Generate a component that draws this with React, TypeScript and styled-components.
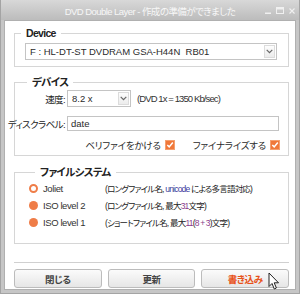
import React from "react";
import styled, { createGlobalStyle } from "styled-components";

const Global = createGlobalStyle`
  html, body { margin: 0; padding: 0; background: #ffffff; }
  body {
    font-family: "Liberation Sans", "Noto Sans CJK JP", sans-serif;
    font-size: 9.5px;
    color: #2a2a2a;
    font-feature-settings: "palt" 1;
  }
  * { box-sizing: border-box; }
`;

const Window = styled.div`
  width: 300px;
  height: 294px;
  display: flex;
  flex-direction: column;
  background: #c6c6c6;
  border: 1px solid #a4a4a4;
  border-top: none;
  padding: 0 3px 3px 3px;
`;

const TitleBar = styled.div`
  height: 20px;
  display: flex;
  align-items: center;
  position: relative;
  background: linear-gradient(#d8d8d8, #bcbcbc);
  margin: 0 -3px;
`;

const Title = styled.div`
  flex: 1;
  text-align: center;
  color: #f7f7f7;
  font-size: 9.5px;
  letter-spacing: -0.55px;
  padding-top: 1px;
`;

const Controls = styled.div`
  position: absolute;
  right: 4px;
  top: 7px;
  display: flex;
  gap: 5px;
  align-items: flex-end;
`;

const Client = styled.div`
  flex: 1;
  background: #ffffff;
  border: 1px solid #b0b0b0;
  padding: 0 6px 0 9px;
  display: flex;
  flex-direction: column;
`;

const Group = styled.section<{ $h: number; $mt: number }>`
  margin-top: ${(p) => p.$mt}px;
  height: ${(p) => p.$h}px;
  border: 1px solid #d6d6d6;
  display: flex;
  flex-direction: column;
`;

const Legend = styled.div<{ $lx: number }>`
  margin: -7px 0 0 ${(p) => p.$lx}px;
  height: 12px;
  line-height: 12px;
  padding: 0 5px;
  width: fit-content;
  background: #ffffff;
  font-weight: bold;
  font-size: 10.5px;
  letter-spacing: -0.7px;
  color: #222;
`;

const SelectBox = styled.div<{ $w: number; $h: number }>`
  width: ${(p) => p.$w}px;
  height: ${(p) => p.$h}px;
  border: 1px solid #c4c4c4;
  display: flex;
  align-items: center;
  background: #fff;
  font-size: 9.5px;
  padding-left: 4px;
  span { flex: 1; white-space: nowrap; }
`;

const Arrow = styled.div`
  width: 11px;
  align-self: stretch;
  margin: 1px;
  border: 1px solid #dcdcdc;
  background: linear-gradient(#fdfdfd, #ececec);
  display: flex;
  align-items: center;
  justify-content: center;
`;

const DeviceBody = styled.div`
  padding: 4px 0 0 10px;
`;

const Row = styled.div<{ $mt: number }>`
  display: flex;
  align-items: center;
  margin-top: ${(p) => p.$mt}px;
`;

const RowLabel = styled.div`
  width: 50px;
  margin-right: 2px;
  display: flex;
  justify-content: flex-end;
  font-size: 9.5px;
  letter-spacing: -0.6px;
  white-space: nowrap;
  color: #222;
`;

const Hint = styled.div`
  margin-left: 6px;
  font-size: 9.5px;
  color: #333;
  letter-spacing: -0.9px;
  white-space: nowrap;
`;

const TextInput = styled.div`
  width: 212px;
  height: 15px;
  border: 1px solid #c4c4c4;
  padding-left: 3px;
  display: flex;
  align-items: center;
  font-size: 9.5px;
`;

const Checks = styled.div`
  display: flex;
  justify-content: flex-end;
  gap: 18px;
  padding-right: 8px;
  margin-top: 7px;
`;

const CheckItem = styled.div`
  display: flex;
  align-items: center;
  gap: 4px;
  font-size: 9.5px;
  letter-spacing: -0.2px;
  white-space: nowrap;
`;

const Box = styled.div`
  width: 10px;
  height: 10px;
  background: #f0783a;
  border: 1px solid #f4a070;
  display: flex;
  align-items: center;
  justify-content: center;
`;

const FsList = styled.div`
  padding: 4px 0 0 14px;
  display: flex;
  flex-direction: column;
  gap: 5px;
`;

const FsRow = styled.div`
  display: flex;
  align-items: center;
  height: 12px;
`;

const Radio = styled.div<{ $on?: boolean }>`
  width: 9px;
  height: 9px;
  border-radius: 50%;
  background: ${(p) => (p.$on ? "#fff" : "#ef7d48")};
  border: ${(p) => (p.$on ? "2.5px solid #ef7d48" : "none")};
`;

const FsName = styled.div`
  width: 62px;
  margin-left: 5px;
  font-size: 9.5px;
  letter-spacing: -0.4px;
  color: #333;
  white-space: nowrap;
`;

const FsDesc = styled.div`
  font-size: 8.5px;
  letter-spacing: -0.8px;
  color: #222;
  white-space: nowrap;
  b { font-weight: normal; color: #3b3b9c; }
  i { font-style: normal; color: #8b3b8b; }
`;

const Separator = styled.div`
  margin-top: 18px;
  height: 1px;
  background: #d0d0d0;
`;

const Buttons = styled.div`
  display: flex;
  gap: 6px;
  margin-top: 6px;
`;

const Button = styled.div<{ $primary?: boolean }>`
  flex: 1;
  height: 19px;
  border: 1px solid #bcbcbc;
  border-radius: 3px;
  background: linear-gradient(#fbfbfb, #e6e6e6);
  display: flex;
  align-items: center;
  justify-content: center;
  font-size: 9.5px;
  letter-spacing: -0.4px;
  font-weight: bold;
  color: ${(p) => (p.$primary ? "#e8521a" : "#444")};
  position: relative;
`;

const Cursor = styled.svg`
  position: absolute;
  right: 8px;
  top: 2px;
`;

const ChevronDown = () => (
  <svg width="7" height="5" viewBox="0 0 7 5">
    <path d="M0.7 0.8 L3.5 3.6 L6.3 0.8" fill="none" stroke="#666" strokeWidth="1.2" />
  </svg>
);

const Tick = () => (
  <svg width="8" height="8" viewBox="0 0 8 8">
    <path d="M1.3 4 L3.2 5.9 L6.8 1.6" fill="none" stroke="#fff" strokeWidth="1.5" />
  </svg>
);

export default function App() {
  return (
    <>
      <Global />
      <Window>
        <TitleBar>
          <Title>DVD Double Layer - 作成の準備ができました</Title>
          <Controls>
            <svg width="6" height="7" viewBox="0 0 6 7"><rect x="0" y="5.5" width="6" height="1.5" fill="#f0f0f0" /></svg>
            <svg width="8" height="7" viewBox="0 0 8 7"><rect x="0.5" y="0.5" width="7" height="6" fill="none" stroke="#f0f0f0" /><rect x="0.5" y="0.5" width="7" height="2" fill="#f0f0f0" /></svg>
            <svg width="6" height="6" viewBox="0 0 6 6"><path d="M0.5 0.5 L5.5 5.5 M5.5 0.5 L0.5 5.5" stroke="#f0f0f0" strokeWidth="1.1" /></svg>
          </Controls>
        </TitleBar>
        <Client>
          <Group $h={34} $mt={12}>
            <Legend $lx={6}>Device</Legend>
            <DeviceBody>
              <SelectBox $w={252} $h={17}>
                <span>F : HL-DT-ST DVDRAM GSA-H44N&nbsp; RB01</span>
                <Arrow><ChevronDown /></Arrow>
              </SelectBox>
            </DeviceBody>
          </Group>

          <Group $h={74} $mt={15}>
            <Legend $lx={12}>デバイス</Legend>
            <Row $mt={2}>
              <RowLabel>速度:</RowLabel>
              <SelectBox $w={64} $h={17}>
                <span>8.2 x</span>
                <Arrow><ChevronDown /></Arrow>
              </SelectBox>
              <Hint>(DVD 1x = 1350 Kb/sec)</Hint>
            </Row>
            <Row $mt={9}>
              <RowLabel>ディスクラベル:</RowLabel>
              <TextInput>date</TextInput>
            </Row>
            <Checks>
              <CheckItem>ベリファイをかける<Box><Tick /></Box></CheckItem>
              <CheckItem>ファイナライズする<Box><Tick /></Box></CheckItem>
            </Checks>
          </Group>

          <Group $h={72} $mt={16}>
            <Legend $lx={20}>ファイルシステム</Legend>
            <FsList>
              <FsRow>
                <Radio $on />
                <FsName>Joliet</FsName>
                <FsDesc>(ロングファイル名, <b>unicode</b> による多言語対応)</FsDesc>
              </FsRow>
              <FsRow>
                <Radio />
                <FsName>ISO level 2</FsName>
                <FsDesc>(ロングファイル名, 最大<i>31</i>文字)</FsDesc>
              </FsRow>
              <FsRow>
                <Radio />
                <FsName>ISO level 1</FsName>
                <FsDesc>(ショートファイル名, 最大<i>11</i>(<i>8 + 3</i>)文字)</FsDesc>
              </FsRow>
            </FsList>
          </Group>

          <Separator />
          <Buttons>
            <Button>閉じる</Button>
            <Button>更新</Button>
            <Button $primary>
              書き込み
              <Cursor width="12" height="19" viewBox="0 0 12 19">
                <path d="M1 1 L1 14.5 L4 11.5 L6.3 17 L8.4 16 L6.2 10.8 L10.5 10.8 Z" fill="#fff" stroke="#222" strokeWidth="1" strokeLinejoin="round" />
              </Cursor>
            </Button>
          </Buttons>
        </Client>
      </Window>
    </>
  );
}
